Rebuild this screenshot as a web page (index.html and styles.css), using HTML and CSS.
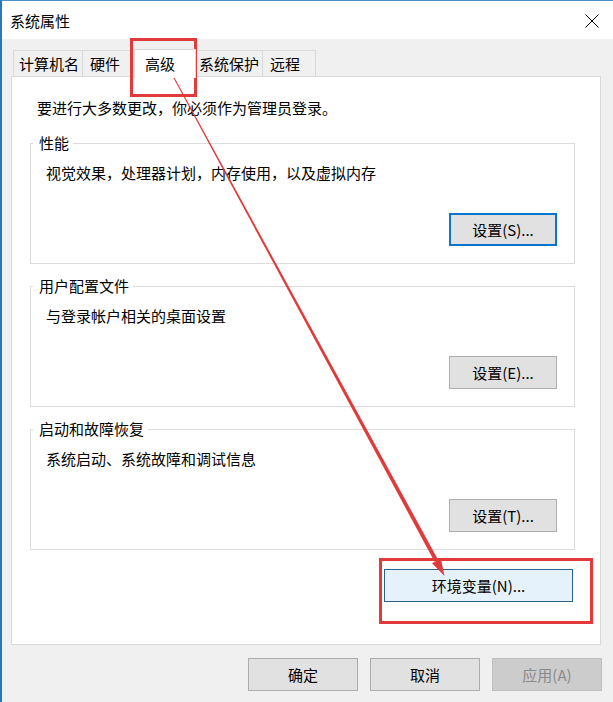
FILE: index.html
```html
<!DOCTYPE html>
<html lang="zh-CN">

<head>
    <meta charset="UTF-8">
    <meta name="viewport" content="width=device-width, initial-scale=1.0">
    <title>系统属性</title>
    <link rel="stylesheet" href="styles.css">
</head>

<body>
    <div class="window">
        <!-- 标题栏 -->
        <div class="titlebar">
            <span class="title">系统属性</span>
            <svg class="close" width="14" height="14" viewBox="0 0 14 14">
                <path d="M0.5 0.5 L13.5 13.5 M13.5 0.5 L0.5 13.5" stroke="#000" stroke-width="1" fill="none" />
            </svg>
        </div>

        <div class="body">
            <!-- 选项卡 -->
            <div class="tabs">
                <div class="tab t1">计算机名</div>
                <div class="tab t2">硬件</div>
                <div class="tab t3 active">高级</div>
                <div class="tab t4">系统保护</div>
                <div class="tab t5">远程</div>
            </div>

            <!-- 高级 -->
            <div class="panel">
                <p class="notice">要进行大多数更改，你必须作为管理员登录。</p>

                <fieldset class="group">
                    <legend>性能</legend>
                    <p class="desc">视觉效果，处理器计划，内存使用，以及虚拟内存</p>
                    <div class="row">
                        <button class="btn focus">设置(S)...</button>
                    </div>
                </fieldset>

                <fieldset class="group">
                    <legend>用户配置文件</legend>
                    <p class="desc">与登录帐户相关的桌面设置</p>
                    <div class="row">
                        <button class="btn">设置(E)...</button>
                    </div>
                </fieldset>

                <fieldset class="group">
                    <legend>启动和故障恢复</legend>
                    <p class="desc">系统启动、系统故障和调试信息</p>
                    <div class="row">
                        <button class="btn">设置(T)...</button>
                    </div>
                </fieldset>

                <div class="env-row">
                    <button class="btn env">环境变量(N)...</button>
                </div>
            </div>

            <!-- 底部按钮 -->
            <div class="footer">
                <button class="btn wide">确定</button>
                <button class="btn wide">取消</button>
                <button class="btn wide disabled">应用(A)</button>
            </div>
        </div>

        <!-- 标注 -->
        <svg class="marks" width="613" height="702" viewBox="0 0 613 702">
            <rect x="131.5" y="39.5" width="64" height="56" fill="none" stroke="#e23a3a" stroke-width="3" />
            <rect x="380.5" y="559.5" width="211" height="63" fill="none" stroke="#e23a3a" stroke-width="3" />
            <polygon points="167.4,64.8 166.6,65.2 434.6,561.8 438.2,559.9" fill="#e03a3a" />
            <polygon points="440.8,558.5 432.0,563.3 444.5,576" fill="#e03a3a" />
        </svg>
    </div>
</body>

</html>
```

FILE: styles.css
```css
/* 基础 */
* {
    margin: 0;
    padding: 0;
    box-sizing: border-box;
}

body {
    background: #f0f0f0;
    font-family: "Noto Sans CJK SC", "Microsoft YaHei", sans-serif;
    font-size: 15px;
    line-height: 20px;
    color: #000;
}

.window {
    position: relative;
    width: 613px;
    height: 702px;
    background: #f0f0f0;
    border-top: 1px solid #4a8fc8;
    border-left: 2px solid #2a78b8;
    overflow: hidden;
}

/* 标题栏 */
.titlebar {
    display: flex;
    align-items: center;
    justify-content: space-between;
    height: 38px;
    padding: 1px 14px 0 8px;
    background: #fff;
}

.close {
    display: block;
}

.body {
    padding: 9px 12px 0 9px;
}

/* 选项卡 */
.tabs {
    display: flex;
    align-items: flex-end;
    height: 29px;
    margin-left: 2px;
}

.tab {
    height: 26px;
    margin-bottom: 1px;
    padding-left: 6px;
    line-height: 25px;
    background: #f0f0f0;
    border: 1px solid #d9d9d9;
    border-bottom: none;
    white-space: nowrap;
}

.t1 {
    width: 70px;
    padding-left: 5px;
}

.t2 {
    width: 53px;
    padding-left: 7px;
    border-left: none;
}

.t3 {
    width: 62px;
}

.t4 {
    width: 69px;
    margin-left: -2px;
    padding-left: 4px;
}

.t5 {
    width: 53px;
    padding-left: 7px;
    border-left: none;
}

.tab.active {
    position: relative;
    z-index: 1;
    height: 29px;
    margin-bottom: -1px;
    margin-left: -2px;
    padding-left: 10px;
    line-height: 27px;
    background: #fff;
}

/* 面板 */
.panel {
    height: 569px;
    margin-top: -1px;
    padding: 21px 25px 0 18px;
    background: #fff;
    border: 1px solid #d9d9d9;
}

.notice {
    margin-left: 7px;
    margin-bottom: 15px;
}

.group {
    margin-bottom: 12px;
    padding: 0 17px 17px 15px;
    border: 1px solid #dcdcdc;
}

.group legend {
    margin-left: -13px;
    padding: 0 4px 0 6px;
}

.desc {
    margin-top: 10px;
}

.row {
    display: flex;
    justify-content: flex-end;
    margin-top: 30px;
}

/* 按钮 */
.btn {
    width: 108px;
    height: 33px;
    font-family: inherit;
    font-size: 15px;
    color: #000;
    background: #e1e1e1;
    border: 1px solid #adadad;
}

.btn.focus {
    border: 2px solid #0a74cf;
}

.env-row {
    display: flex;
    justify-content: flex-end;
    margin-top: 19px;
    margin-right: 2px;
}

.btn.env {
    width: 189px;
    background: #e5f1fb;
    border: 1px solid #2c6487;
}

.footer {
    display: flex;
    justify-content: flex-end;
    gap: 12px;
    margin-top: 13px;
    margin-right: -1px;
}

.btn.wide {
    width: 110px;
}

.btn.disabled {
    color: #8a8a8a;
    background: #cccccc;
    border-color: #bfbfbf;
}

/* 标注层 */
.marks {
    position: absolute;
    top: -1px;
    left: -2px;
    pointer-events: none;
}
```
